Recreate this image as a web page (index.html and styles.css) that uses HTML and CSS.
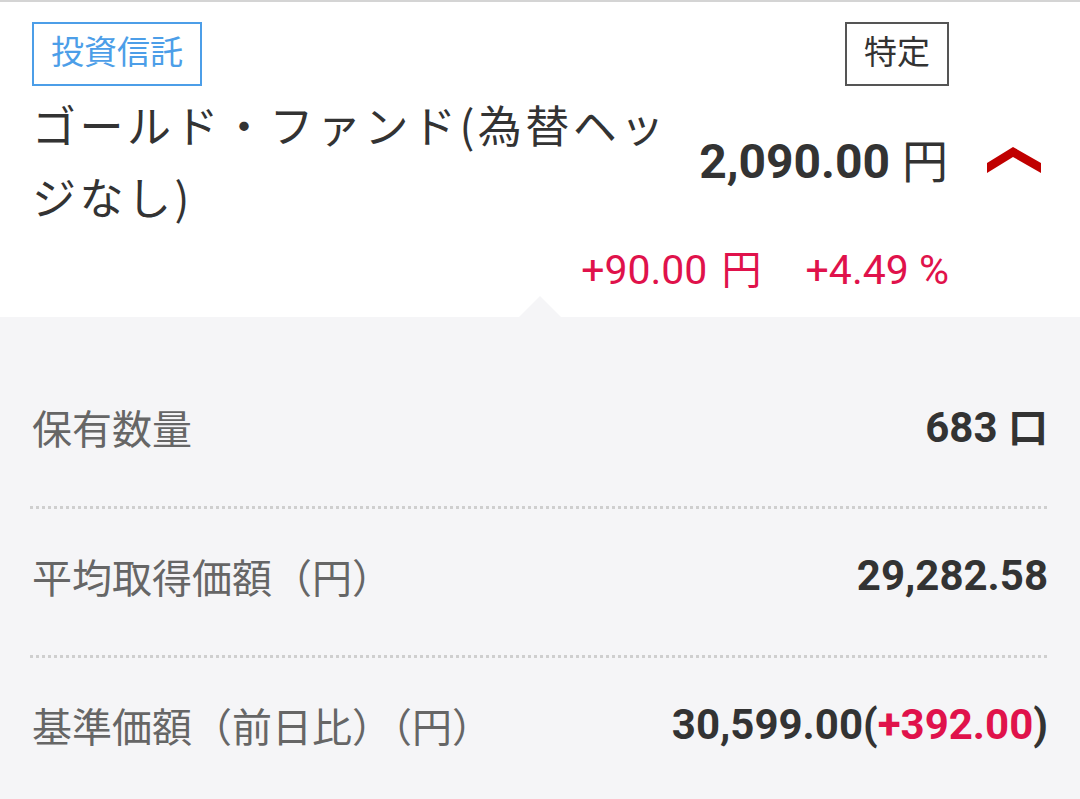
FILE: index.html
```html
<!DOCTYPE html>
<html lang="ja">
<head>
<meta charset="utf-8">
<title>保有資産</title>
<link rel="stylesheet" href="styles.css">
</head>
<body>
<div class="topline"></div>
<header class="head">
  <div class="tags">
    <span class="tag tag-fund">投資信託</span>
    <span class="tag tag-acct">特定</span>
  </div>
  <div class="titlerow">
    <h1 class="title">ゴールド・ファンド(為替ヘッジなし)</h1>
    <div class="price"><span class="num">2,090.00</span> <span class="yen">円</span></div>
    <svg class="chev" width="54" height="26" viewBox="0 0 54 26" aria-hidden="true">
      <polygon points="0,16 26,0 54,16 54,26 26,10 0,26" fill="#c00000"/>
    </svg>
  </div>
  <div class="change">
    <span class="num">+90.00</span> <span class="yen">円</span><span class="gap"></span><span class="num">+4.49 %</span>
  </div>
</header>
<section class="detail">
  <div class="row">
    <span class="label">保有数量</span>
    <span class="value">683 <span class="jp">口</span></span>
  </div>
  <div class="row">
    <span class="label">平均取得価額（円）</span>
    <span class="value">29,282.58</span>
  </div>
  <div class="row">
    <span class="label">基準価額（前日比）（円）</span>
    <span class="value">30,599.00(<span class="up">+392.00</span>)</span>
  </div>
</section>
</body>
</html>
```
FILE: styles.css
```css
html, body {
  margin: 0;
  padding: 0;
}
body {
  width: 1080px;
  height: 799px;
  overflow: hidden;
  background: #f5f5f7;
  font-family: "Noto Sans CJK JP", "Noto Sans", sans-serif;
  color: #333;
}
.topline {
  height: 2px;
  background: #d4d4d4;
}
.head {
  background: #fff;
  padding: 20px 39px 26px 32px;
}
.tags {
  display: flex;
  justify-content: space-between;
  padding-right: 92px;
}
.tag {
  display: block;
  font-size: 33px;
  line-height: 48px;
  padding: 2px 17px 10px 17px;
  border: 2px solid;
}
.tag-fund {
  color: #4c9ee8;
  border-color: #4c9ee8;
}
.tag-acct {
  color: #333;
  border-color: #555;
}
.titlerow {
  display: flex;
  align-items: center;
  margin-top: 2px;
}
.title {
  flex: 0 0 650px;
  margin: 0;
  font-size: 44px;
  font-weight: 400;
  line-height: 72px;
  letter-spacing: 3.5px;
  color: #333;
}
.price {
  margin-left: auto;
  white-space: nowrap;
  line-height: 60px;
  font-family: Roboto, "Liberation Sans", sans-serif;
  font-size: 48px;
}
.price .num {
  font-weight: 700;
  color: #333;
}
.price .yen {
  font-family: "Noto Sans CJK JP", sans-serif;
  font-size: 46px;
  font-weight: 400;
  color: #333;
}
.chev {
  display: block;
  margin-left: 39px;
  flex: none;
}
.change {
  margin-top: 11px;
  padding-right: 92px;
  text-align: right;
  color: #e0124b;
  line-height: 48px;
  height: 48px;
  white-space: nowrap;
  font-family: Roboto, "Liberation Sans", sans-serif;
  font-size: 41px;
}
.change .yen {
  font-family: "Noto Sans CJK JP", sans-serif;
  font-size: 40px;
  margin-left: 4px;
}
.change .gap {
  display: inline-block;
  width: 44px;
}
.detail {
  position: relative;
  padding: 43px 30px 0 30px;
}
.detail::before {
  content: "";
  position: absolute;
  top: -21px;
  left: 519px;
  border-left: 21px solid transparent;
  border-right: 21px solid transparent;
  border-bottom: 21px solid #f5f5f7;
}
.row {
  box-sizing: border-box;
  height: 149px;
  display: flex;
  align-items: center;
  justify-content: space-between;
  padding: 0 2px 16px 2px;
  background-image: repeating-linear-gradient(to right, #cfcfcf 0 3px, transparent 3px 6px);
  background-size: 100% 3px;
  background-repeat: no-repeat;
  background-position: bottom left;
}
.label {
  font-size: 40px;
  color: #666;
  line-height: 58px;
}
.value {
  font-family: Roboto, "Liberation Sans", sans-serif;
  font-weight: 700;
  font-size: 42px;
  color: #333;
  line-height: 58px;
  white-space: nowrap;
}
.value .jp {
  font-family: "Noto Sans CJK JP", sans-serif;
  font-size: 40px;
}
.value .up {
  color: #e0124b;
}
```
